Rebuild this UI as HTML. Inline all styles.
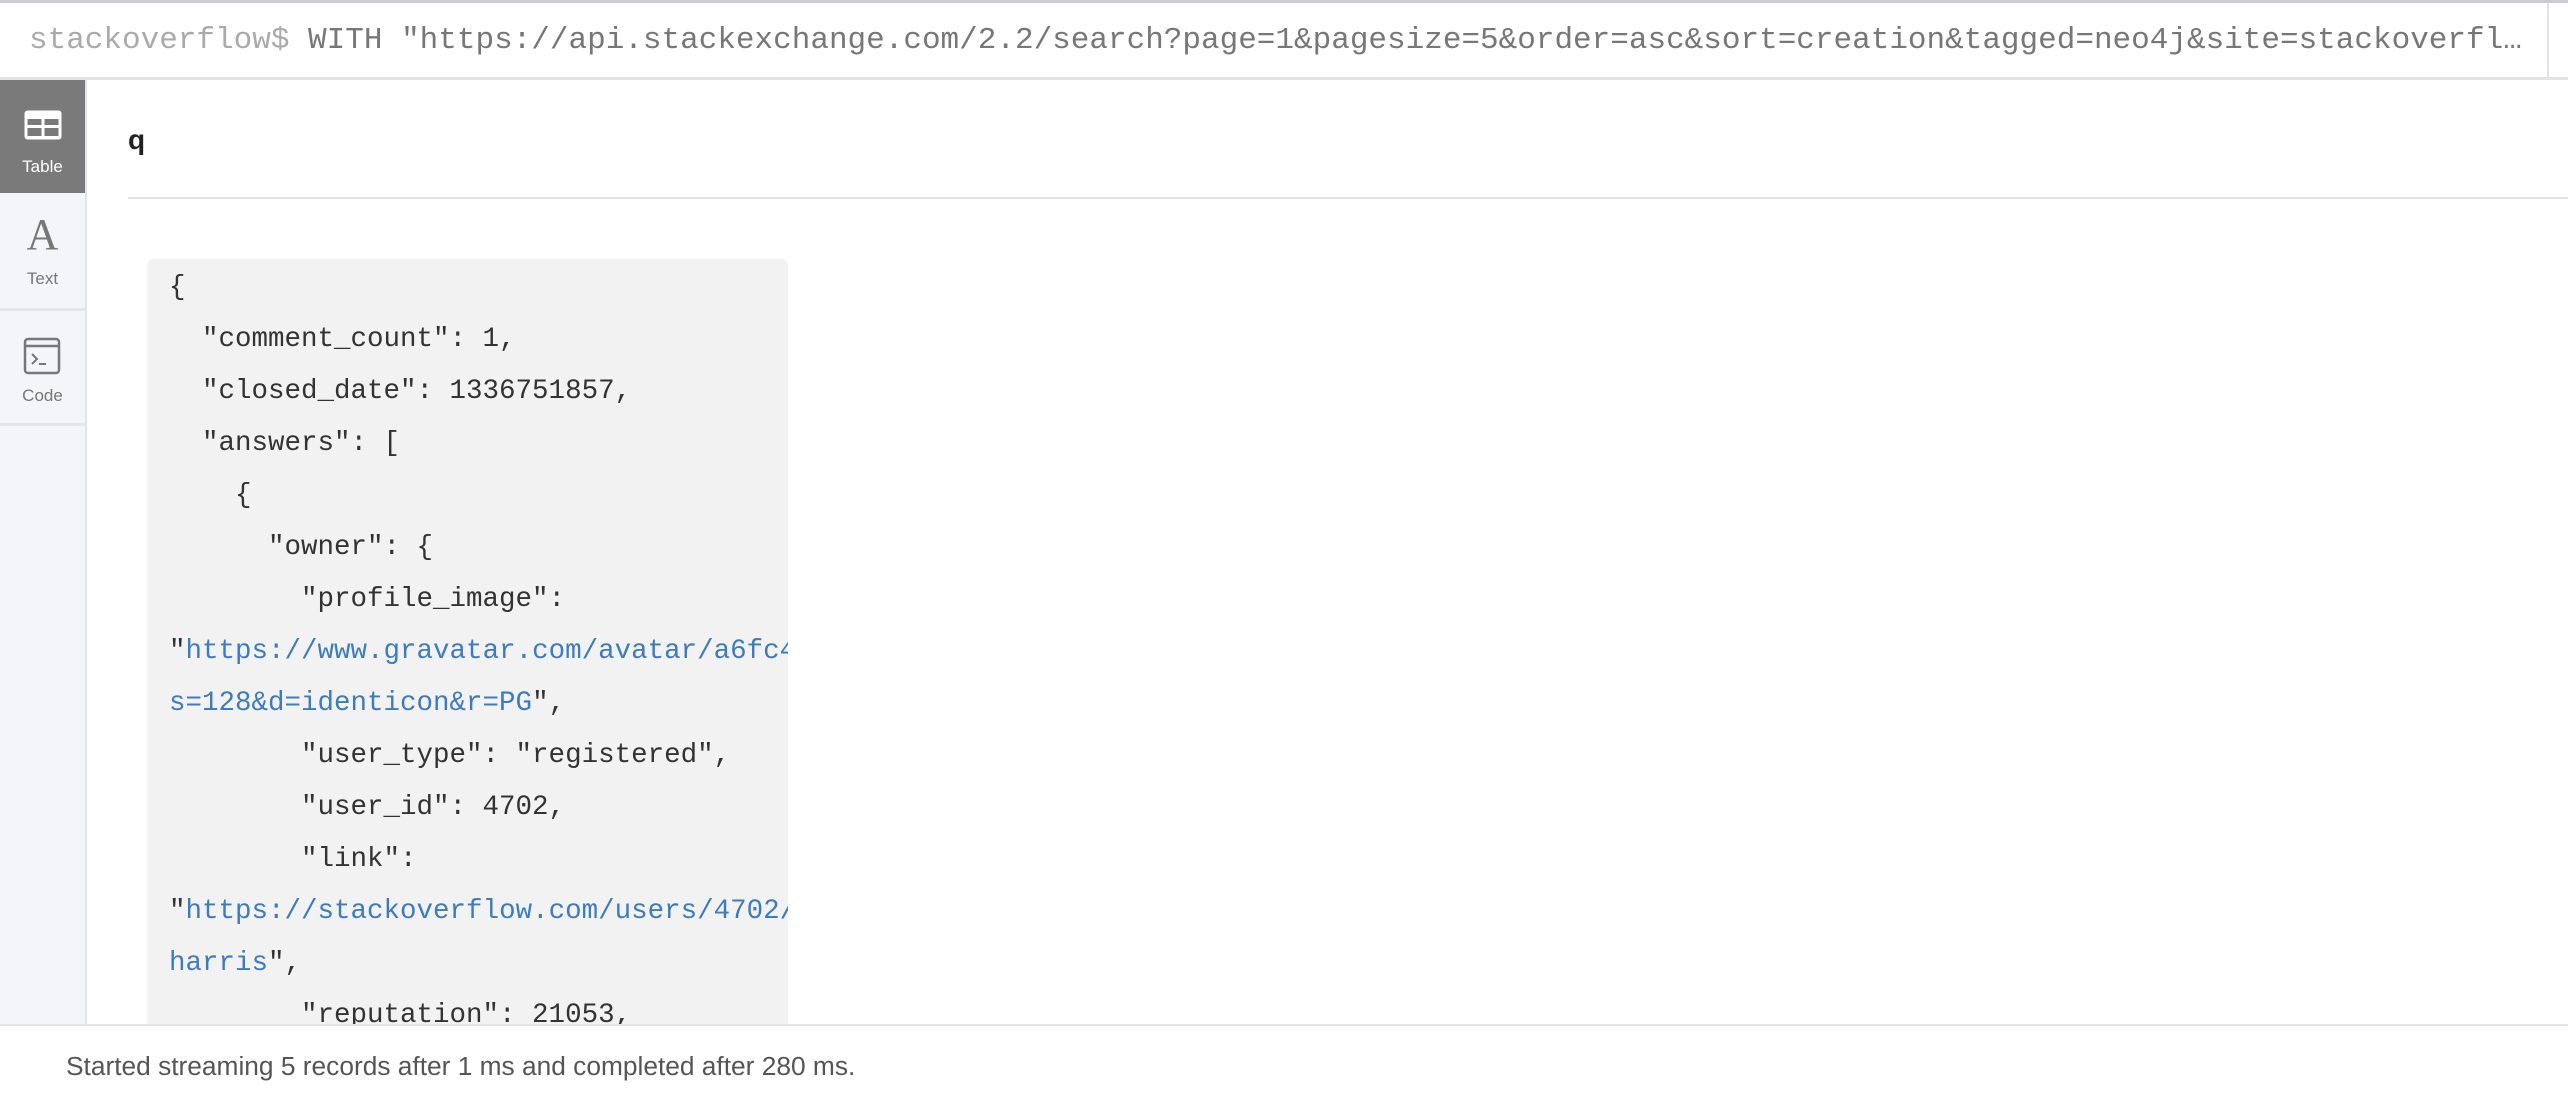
<!DOCTYPE html>
<html><head><meta charset="utf-8"><style>
*{margin:0;padding:0;box-sizing:border-box}
html,body{width:2568px;height:1100px;overflow:hidden;background:#fff;font-family:"Liberation Sans",sans-serif}
#hdr{position:absolute;left:0;top:0;width:2568px;height:80px;border-top:3px solid #c9cdd2;border-bottom:3px solid #e0e3e7}
#hdr .t{position:absolute;left:29px;top:18px;width:2500px;font:31px/40px "Liberation Mono",monospace;color:#777;white-space:nowrap;overflow:hidden;text-overflow:ellipsis}
#hdr .t span{color:#aaa}
#hdr .r{position:absolute;left:2547px;top:0;width:2px;height:77px;background:#e0e3e7}
#side{position:absolute;left:0;top:80px;width:87px;height:945px;background:#f4f5f8;border-right:2px solid #e0e3e7}
.tile{position:absolute;left:0;width:85px;border-bottom:3px solid #e3e5ea;text-align:center;color:#777;font-size:17px}
#main .q{position:absolute;left:128px;top:124px;font:bold 28px "Liberation Sans",sans-serif;color:#222}
#main .line{position:absolute;left:128px;top:197px;width:2440px;height:2px;background:#dfe2e6}
#code{position:absolute;left:147px;top:259px;width:641px;height:800px;background:#f2f2f2;border-radius:7px;overflow:hidden}
#code pre{position:absolute;left:22px;top:3px;font:27.5px/52px "Liberation Mono",monospace;color:#333;white-space:pre}
#code b{font-weight:normal;color:#3d7bbf}
#foot{position:absolute;left:0;top:1024px;width:2568px;height:76px;background:#fff;border-top:2px solid #e0e3e7}
#foot div{position:absolute;left:66px;top:25px;font-size:26.3px;color:#555}
</style></head><body>
<div id="hdr"><div class="t"><span>stackoverflow$</span> WITH "https://api.stackexchange.com/2.2/search?page=1&amp;pagesize=5&amp;order=asc&amp;sort=creation&amp;tagged=neo4j&amp;site=stackoverflow&amp;filter=!5-i6Zw8Y)4W7vpy91PMYsKM-k9yzEsSC1_Uxlf" AS url</div><div class="r"></div></div>
<div id="side">
 <div class="tile" style="top:0;height:113px;background:#7a7a7a;color:#fff;border-bottom:none">
  <svg width="40" height="32" viewBox="0 0 40 32" style="position:absolute;left:23px;top:29px"><rect x="1.5" y="1.5" width="37" height="29" rx="3" fill="#fff"/><g fill="#7a7a7a"><rect x="4.5" y="10" width="14" height="6"/><rect x="21.5" y="10" width="14" height="6"/><rect x="4.5" y="19" width="14" height="8"/><rect x="21.5" y="19" width="14" height="8"/></g></svg>
  <div style="position:absolute;left:0;width:85px;top:77px">Table</div>
 </div>
 <div class="tile" style="top:113px;height:118px">
  <div style="position:absolute;left:0;width:85px;top:16px;font:44px 'Liberation Serif',serif;color:#777">A</div>
  <div style="position:absolute;left:0;width:85px;top:76px">Text</div>
 </div>
 <div class="tile" style="top:231px;height:115px">
  <svg width="38" height="38" viewBox="0 0 38 38" style="position:absolute;left:23px;top:26px"><rect x="2" y="2" width="34" height="34" rx="3" fill="none" stroke="#777" stroke-width="2.5"/><line x1="2" y1="9" x2="36" y2="9" stroke="#777" stroke-width="2.5"/><path d="M9 17 L14 22 L9 27" fill="none" stroke="#777" stroke-width="2"/><line x1="16" y1="27" x2="23" y2="27" stroke="#777" stroke-width="2"/></svg>
  <div style="position:absolute;left:0;width:85px;top:75px">Code</div>
 </div>
</div>
<div id="main"><div class="q">q</div><div class="line"></div>
<div id="code"><pre>{
  "comment_count": 1,
  "closed_date": 1336751857,
  "answers": [
    {
      "owner": {
        "profile_image":
"<b>https://www.gravatar.com/avatar/a6fc48e4b6d9e0d1</b>
<b>s=128&amp;d=identicon&amp;r=PG</b>",
        "user_type": "registered",
        "user_id": 4702,
        "link":
"<b>https://stackoverflow.com/users/4702/mike-</b>
<b>harris</b>",
        "reputation": 21053,
        "display_name": "Mike Harris"</pre></div>
</div>
<div id="foot"><div>Started streaming 5 records after 1 ms and completed after 280 ms.</div></div>
</body></html>
